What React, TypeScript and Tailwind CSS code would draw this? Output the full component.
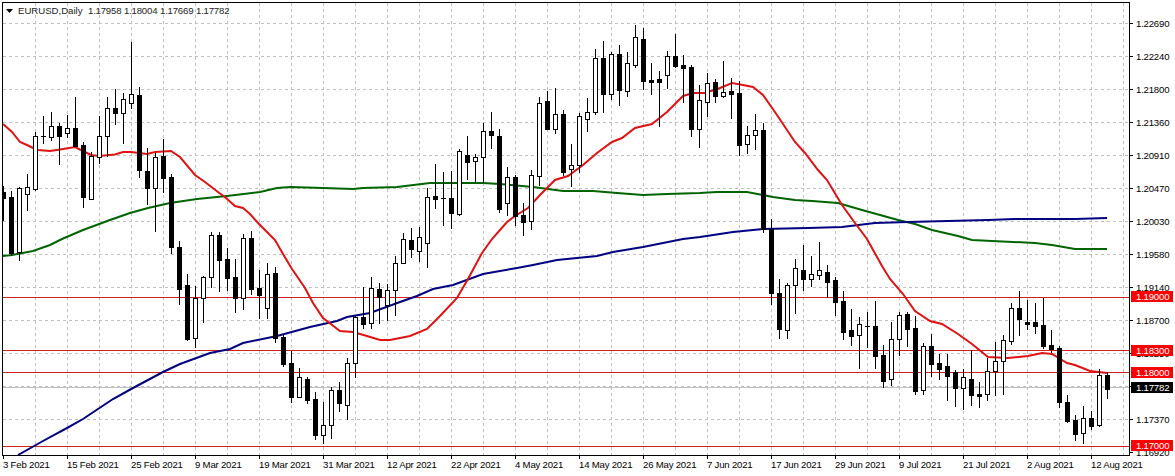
// EURUSD daily chart, MT4 style
type Candle = [number, number, number, number, number];

// high, body top, body bottom, low, bull (1 = hollow). Pixel rows, 8px apart starting at x=3.
const candles: Candle[] = [
  [186, 192, 198, 220, 0], [191, 197, 253, 255, 0], [187, 188, 252, 260, 1], [174, 187, 194, 210, 1],
  [132, 136, 189, 190, 1], [116, 136, 136, 143, 0], [112, 126, 137, 140, 1], [123, 126, 136, 164, 0],
  [115, 128, 133, 137, 1], [97, 128, 146, 146, 0], [142, 145, 197, 207, 0], [152, 156, 199, 199, 1],
  [116, 136, 157, 163, 1], [97, 108, 136, 156, 1], [89, 108, 113, 124, 0], [93, 99, 113, 143, 1],
  [42, 94, 103, 108, 1], [87, 95, 170, 177, 0], [148, 171, 188, 204, 0], [153, 157, 188, 231, 1],
  [139, 156, 178, 192, 0], [174, 177, 247, 253, 0], [241, 247, 289, 304, 0], [274, 285, 339, 340, 0],
  [286, 298, 338, 347, 1], [276, 277, 298, 322, 1], [232, 235, 277, 287, 1], [232, 235, 260, 291, 0],
  [248, 259, 278, 290, 0], [259, 277, 298, 312, 0], [234, 238, 298, 309, 1], [231, 238, 289, 294, 0],
  [270, 288, 295, 318, 0], [263, 274, 308, 318, 1], [267, 273, 338, 342, 0], [334, 337, 364, 366, 0],
  [351, 363, 397, 402, 0], [368, 377, 397, 397, 1], [377, 379, 400, 403, 0], [392, 399, 435, 439, 0],
  [402, 425, 435, 443, 1], [387, 390, 425, 438, 1], [382, 390, 403, 411, 0], [358, 363, 405, 419, 1],
  [316, 317, 363, 377, 1], [287, 317, 324, 328, 0], [277, 288, 323, 328, 1], [283, 289, 297, 323, 0],
  [284, 290, 305, 320, 1], [256, 263, 290, 315, 1], [233, 239, 263, 263, 1], [228, 240, 249, 257, 0],
  [227, 237, 251, 261, 1], [188, 197, 243, 267, 1], [164, 196, 199, 208, 0], [172, 198, 198, 225, 0],
  [171, 198, 213, 228, 0], [149, 151, 214, 215, 1], [136, 155, 162, 179, 0], [154, 157, 161, 182, 1],
  [123, 131, 157, 182, 1], [112, 131, 135, 148, 0], [129, 136, 209, 212, 0], [167, 177, 203, 215, 1],
  [175, 177, 216, 225, 0], [203, 215, 222, 235, 0], [170, 175, 221, 229, 1], [97, 103, 176, 185, 1],
  [91, 101, 129, 129, 0], [88, 114, 129, 133, 1], [110, 114, 172, 175, 0], [144, 165, 169, 186, 1],
  [113, 116, 165, 172, 1], [98, 112, 119, 131, 1], [49, 58, 112, 114, 1], [41, 58, 94, 112, 0],
  [52, 54, 94, 99, 1], [45, 54, 90, 105, 0], [52, 63, 91, 96, 1], [25, 37, 65, 67, 1],
  [28, 39, 81, 89, 0], [63, 80, 82, 94, 0], [71, 79, 82, 126, 0], [51, 56, 75, 88, 1],
  [34, 56, 66, 67, 0], [55, 65, 68, 102, 0], [65, 67, 129, 136, 0], [85, 100, 129, 147, 1],
  [73, 83, 102, 116, 1], [79, 82, 96, 102, 0], [61, 92, 96, 97, 1], [78, 91, 94, 118, 0],
  [81, 93, 145, 155, 0], [126, 135, 144, 153, 1], [114, 130, 135, 149, 1], [123, 130, 229, 232, 0],
  [219, 229, 293, 304, 0], [279, 293, 329, 338, 0], [283, 285, 330, 338, 1], [259, 268, 285, 313, 1],
  [245, 270, 279, 290, 0], [256, 274, 279, 286, 1], [242, 270, 275, 279, 1], [265, 272, 282, 297, 0],
  [277, 280, 302, 315, 0], [291, 301, 332, 339, 0], [309, 330, 336, 345, 0], [317, 324, 335, 368, 1],
  [312, 326, 326, 347, 0], [301, 326, 356, 368, 0], [345, 355, 381, 387, 0], [322, 339, 379, 385, 1],
  [312, 315, 339, 355, 1], [312, 314, 329, 346, 0], [316, 328, 391, 394, 0], [343, 346, 390, 394, 1],
  [334, 346, 364, 376, 0], [354, 363, 369, 379, 0], [354, 366, 376, 400, 0], [370, 372, 388, 406, 0],
  [369, 377, 388, 409, 1], [350, 379, 395, 405, 0], [382, 394, 396, 407, 0], [358, 371, 394, 400, 1],
  [342, 361, 371, 395, 1], [335, 340, 361, 394, 1], [303, 308, 341, 344, 1], [291, 308, 319, 335, 0],
  [300, 322, 324, 329, 0], [303, 322, 326, 333, 0], [298, 325, 346, 348, 0], [330, 345, 349, 352, 0],
  [346, 348, 402, 407, 0], [395, 402, 421, 422, 0], [415, 420, 434, 440, 0], [406, 418, 433, 443, 1],
  [411, 418, 426, 429, 0], [369, 375, 425, 426, 1], [372, 375, 389, 398, 0],
];

const redLine =
  "3,124 12,132 20,142 27,145 35,149 38,150 50,151 60,149.5 75,147 83,151 91,155 99,156 115,154.5 123,152 131,152 147,154 155,152 171,151 180,157 195,175 205,182 218,192 226,198 235,206 243,208 250,214 259,224 267,232 275,240 283,254 292,269 305,288 313,303 323,318 340,331 353,332 367,336 380,340 390,340 400,338 410,336 427,329 440,316 457,298 468,279 482,253 492,239 507,222 515,216 528,208 540,195 555,180 568,176 583,165 597,153 612,142 622,138 635,128 652,124 667,112 683,96 693,93 705,93 720,88 732,83 743,85 753,87 763,95 777,115 795,142 805,153 818,170 827,180 842,205 855,223 867,239 882,266 890,279 903,294 915,311 930,321 942,324 958,334 972,344 988,357 1008,358 1028,356 1042,353 1052,354 1067,363 1075,365 1090,371 1107,373";
const greenLine =
  "3,256 12,255 33,251 50,245 62,239 83,230 110,220 130,213 148,208 170,203 197,199 227,196 260,192 277,188 290,187 323,188 353,189 363,188 397,187 430,183 450,183 483,183 500,184 533,187 563,191 593,191 617,193 643,195 667,194 700,193 717,192 747,192 773,197 795,200 812,201 838,203 862,210 898,220 915,224 932,230 958,236 972,240 992,241 1035,243 1052,245 1075,249 1107,249";
const blueLine =
  "18,455 43,441 67,428 83,419 113,399 133,388 163,372 180,364 210,353 230,349 243,343 277,336 310,327 337,321 347,317 370,313 400,302 417,296 433,289 453,285 483,274 500,271 517,268 533,265 557,260 597,256 613,252 643,247 683,239 700,237 733,232 763,229 808,228 842,227 875,223 908,222 988,220 1015,219 1075,219 1107,218";

const priceLabels = [
  "1.22690", "1.22240", "1.21800", "1.21360", "1.20910", "1.20470", "1.20030",
  "1.19580", "1.19140", "1.18700", "1.18250", "1.17810", "1.17370", "1.16920",
];

const dateLabels = [
  "3 Feb 2021", "15 Feb 2021", "25 Feb 2021", "9 Mar 2021", "19 Mar 2021", "31 Mar 2021",
  "12 Apr 2021", "22 Apr 2021", "4 May 2021", "14 May 2021", "26 May 2021", "7 Jun 2021",
  "17 Jun 2021", "29 Jun 2021", "9 Jul 2021", "21 Jul 2021", "2 Aug 2021", "12 Aug 2021",
];

const tags = [
  { label: "1.19000", className: "top-[291px] bg-[#ff0000]" },
  { label: "1.18300", className: "top-[345px] bg-[#ff0000]" },
  { label: "1.18000", className: "top-[367px] bg-[#ff0000]" },
  { label: "1.17782", className: "top-[382px] bg-black" },
  { label: "1.17000", className: "top-[440px] bg-[#ff0000]" },
];

const gridX = Array.from({ length: 35 }, (_, k) => 35 + 32 * k);
const gridY = Array.from({ length: 13 }, (_, k) => 23 + 33 * k);
const levels = [297, 350, 372, 446];

function CandleMark({ candle, index }: { candle: Candle; index: number }) {
  const [high, top, bottom, low, bull] = candle;
  const x = 3 + 8 * index;
  return (
    <g>
      <line x1={x + 0.5} x2={x + 0.5} y1={high} y2={low + 1} stroke="#000" />
      {bull ? (
        <rect x={x - 1.5} y={top + 0.5} width={4} height={bottom - top} fill="#fff" stroke="#000" />
      ) : (
        <rect x={x - 2} y={top} width={5} height={bottom - top + 1} fill="#000" />
      )}
    </g>
  );
}

function Chart() {
  return (
    <div className="relative ml-[2px] mt-[2px] h-[454px] w-[1128px] shrink-0 overflow-hidden border border-black bg-white">
      <svg className="block" width="1126" height="452" viewBox="3 3 1126 452">
        {gridX.map((x) => (
          <line key={x} x1={x + 0.5} x2={x + 0.5} y1={3} y2={455} stroke="#c0c0c0" strokeDasharray="3 3" />
        ))}
        {gridY.map((y) => (
          <line key={y} x1={3} x2={1129} y1={y + 0.5} y2={y + 0.5} stroke="#c0c0c0" strokeDasharray="3 3" />
        ))}
        <line x1={3} x2={1129} y1={387.5} y2={387.5} stroke="#c0c0c0" />
        {levels.map((y) => (
          <line key={y} x1={3} x2={1129} y1={y + 0.5} y2={y + 0.5} stroke="#d21f1f" />
        ))}
        <polyline points={greenLine} fill="none" stroke="#006400" strokeWidth="2" />
        <polyline points={blueLine} fill="none" stroke="#000080" strokeWidth="2" />
        <polyline points={redLine} fill="none" stroke="#e01212" strokeWidth="2" />
        {candles.map((candle, index) => (
          <CandleMark key={index} candle={candle} index={index} />
        ))}
        <path d="M6 9h7l-3.5 4z" fill="#000" />
      </svg>
      <div className="absolute left-[15px] top-[2px] flex text-[9.6px] leading-[12px] whitespace-nowrap text-[#222]">
        <span className="w-[70px]">EURUSD,Daily</span>
        <span className="w-[36px] tracking-[-0.2px]">1.17958</span>
        <span className="w-[36px] tracking-[-0.2px]">1.18004</span>
        <span className="w-[36px] tracking-[-0.2px]">1.17669</span>
        <span className="tracking-[-0.2px]">1.17782</span>
      </div>
    </div>
  );
}

function PriceAxis() {
  return (
    <div className="relative flex h-[456px] w-[45px] shrink-0 flex-col pt-[7px] text-[9.6px] leading-none tracking-[-0.2px] text-black">
      {priceLabels.map((label) => (
        <div key={label} className="flex h-[33px] shrink-0 items-center">
          <span className="h-px w-[3px] bg-black" />
          <span className="ml-[3px]">{label}</span>
        </div>
      ))}
      {tags.map((tag) => (
        <div
          key={tag.label}
          className={`absolute left-[1px] flex h-[11px] w-[42px] items-center pl-[5px] text-white ${tag.className}`}
        >
          {tag.label}
        </div>
      ))}
    </div>
  );
}

function DateAxis() {
  return (
    <div className="flex pl-[3px] text-[9.6px] leading-[10px] tracking-[-0.2px] text-black">
      {dateLabels.map((label) => (
        <div key={label} className="flex w-[64px] shrink-0 flex-col">
          <span className="h-[3px] w-px bg-black" />
          <span className="mt-px whitespace-nowrap">{label}</span>
        </div>
      ))}
    </div>
  );
}

export default function App() {
  return (
    <div className="h-[476px] w-[1175px] overflow-hidden bg-white font-['Liberation_Sans',Arial,sans-serif]">
      <div className="flex">
        <Chart />
        <PriceAxis />
      </div>
      <DateAxis />
    </div>
  );
}
